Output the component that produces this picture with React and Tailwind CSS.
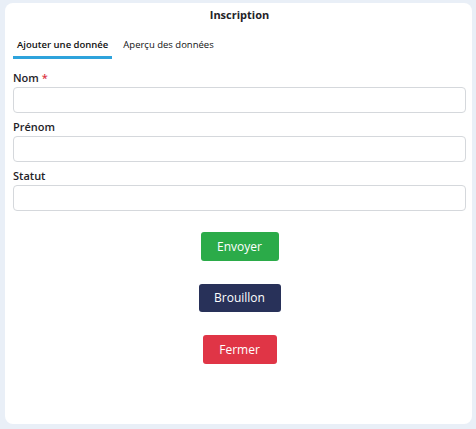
import React from 'react';

const Field = ({ label, required, first }) => (
  <div className={first ? 'flex flex-col' : 'mt-[7px] flex flex-col'}>
    <label className="mb-[2px] text-[11px] leading-[14px] font-semibold text-[#1f2328]">
      {label}
      {required && <span className="text-[#dc3545]"> *</span>}
    </label>
    <input
      type="text"
      className="h-[26px] w-full rounded-[4px] border border-[#d5d8dc] bg-white px-2 text-[11px] outline-none"
    />
  </div>
);

export default function App() {
  return (
    <div
      className="h-[429px] w-[476px] bg-[#e9eff7] pl-[5px] pr-[4px] pt-[3px] pb-[5px]"
      style={{ fontFamily: '"Open Sans", "Noto Sans", sans-serif' }}
    >
      <div className="flex h-full flex-col rounded-[8px] bg-white pl-[8px] pr-[6px] pt-[4px]">
        {/* TITLE */}
        <h1 className="text-center text-[11px] leading-[15px] font-bold text-[#1f2328]">Inscription</h1>

        {/* TABS */}
        <div className="mt-[16px] flex gap-[7px]">
          <div className="border-b-[3px] border-[#2ea3dc] px-[4px] pb-[4px] text-[9.5px] leading-[14px] font-semibold text-[#111]">
            Ajouter une donnée
          </div>
          <div className="px-[4px] pb-[4px] text-[9.5px] leading-[14px] text-[#111]">Aperçu des données</div>
        </div>

        {/* FORM */}
        <div className="mt-[12px] flex flex-col">
          <Field label="Nom" required first />
          <Field label="Prénom" />
          <Field label="Statut" />
        </div>

        {/* ACTIONS */}
        <div className="mt-[21px] flex flex-col items-center gap-[23px]">
          <button className="h-[29px] w-[78px] rounded-[3px] bg-[#2bab49] text-[12px] text-white">Envoyer</button>
          <button className="h-[28px] w-[82px] rounded-[3px] bg-[#283159] text-[12px] text-white">Brouillon</button>
          <button className="h-[29px] w-[74px] rounded-[3px] bg-[#e03546] text-[12px] text-white">Fermer</button>
        </div>
      </div>
    </div>
  );
}
